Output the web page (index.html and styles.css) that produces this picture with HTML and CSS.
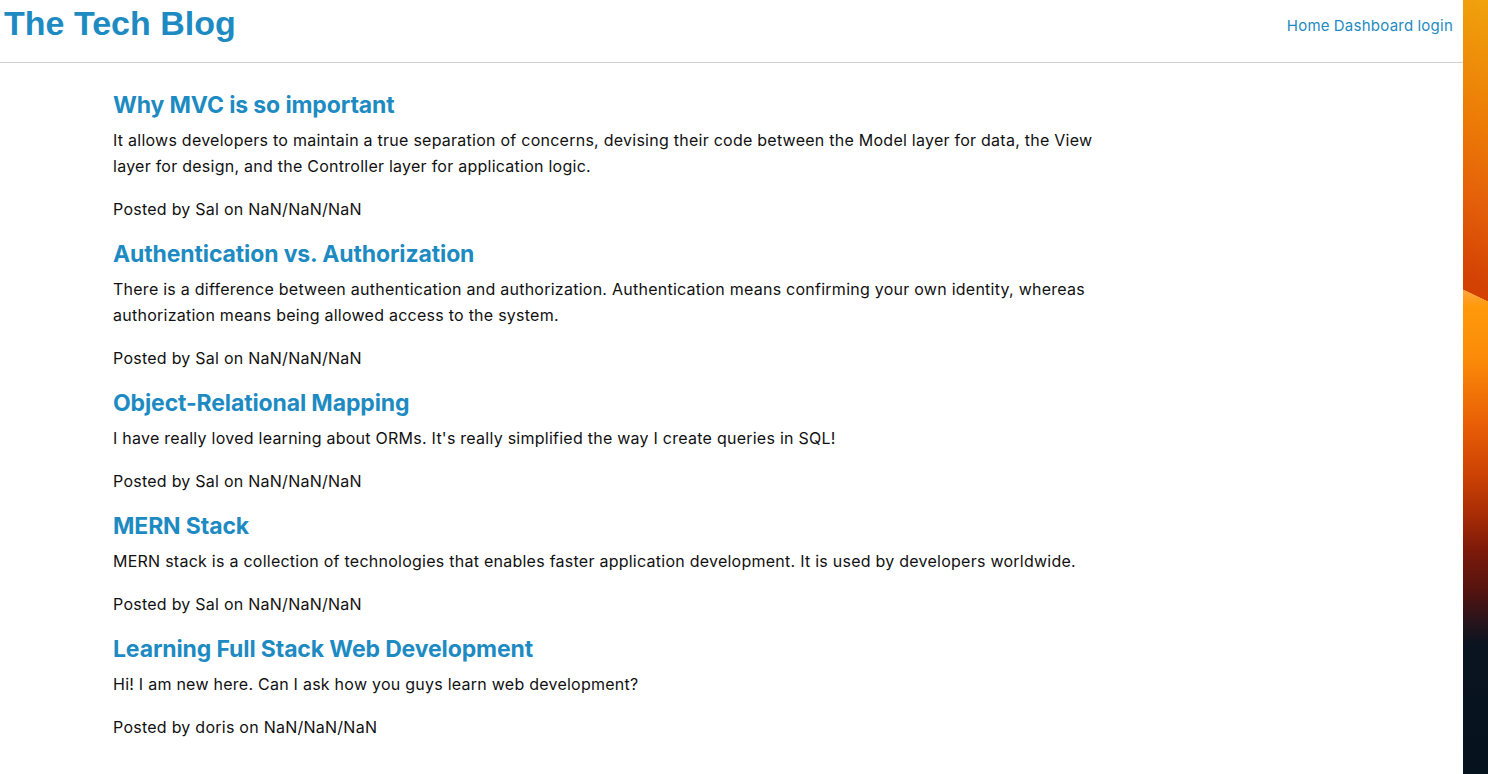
FILE: index.html
```html
<!DOCTYPE html>
<html lang="en">
<head>
<meta charset="utf-8">
<title>The Tech Blog</title>
<link rel="stylesheet" href="styles.css">
</head>
<body>
<div class="window">
  <div class="page">
    <header class="site-header">
      <h1 class="brand">The Tech Blog</h1>
      <nav class="nav">
        <a href="#">Home</a>
        <a href="#">Dashboard</a>
        <a href="#">login</a>
      </nav>
    </header>
    <main class="posts">
      <article class="post">
        <h2 class="post-title">Why MVC is so important</h2>
        <p class="post-body">It allows developers to maintain a true separation of concerns, devising their code between the Model layer for data, the View layer for design, and the Controller layer for application logic.</p>
        <p class="post-meta">Posted by Sal on NaN/NaN/NaN</p>
      </article>
      <article class="post">
        <h2 class="post-title">Authentication vs. Authorization</h2>
        <p class="post-body">There is a difference between authentication and authorization. Authentication means confirming your own identity, whereas authorization means being allowed access to the system.</p>
        <p class="post-meta">Posted by Sal on NaN/NaN/NaN</p>
      </article>
      <article class="post">
        <h2 class="post-title">Object-Relational Mapping</h2>
        <p class="post-body">I have really loved learning about ORMs. It's really simplified the way I create queries in SQL!</p>
        <p class="post-meta">Posted by Sal on NaN/NaN/NaN</p>
      </article>
      <article class="post">
        <h2 class="post-title">MERN Stack</h2>
        <p class="post-body">MERN stack is a collection of technologies that enables faster application development. It is used by developers worldwide.</p>
        <p class="post-meta">Posted by Sal on NaN/NaN/NaN</p>
      </article>
      <article class="post">
        <h2 class="post-title">Learning Full Stack Web Development</h2>
        <p class="post-body">Hi! I am new here. Can I ask how you guys learn web development?</p>
        <p class="post-meta">Posted by doris on NaN/NaN/NaN</p>
      </article>
    </main>
  </div>
  <div class="desktop"></div>
</div>
</body>
</html>
```
FILE: styles.css
```css
html, body {
  margin: 0;
  padding: 0;
  height: 100%;
}
body {
  font-family: Inter, "Noto Sans", sans-serif;
  color: #111;
  background: #fff;
  overflow: hidden;
}
.window {
  display: flex;
  height: 774px;
}
.page {
  flex: 0 0 1463px;
  background: #fff;
}
.desktop {
  flex: 1 1 auto;
  background-color: #05131f;
  background-image:
    linear-gradient(205.6deg,
      #f0a30c 0px,
      #ec7a06 118px,
      #e4600a 186px,
      #d34203 258px,
      #d24002 271.5px,
      transparent 272px),
    linear-gradient(180deg,
      #ffb347 0px,
      #ffa53a 292px,
      #ff9a0b 306px,
      #fb8a08 360px,
      #e85e06 425px,
      #cc4204 475px,
      #a82c05 515px,
      #7d1a0a 550px,
      #55130f 590px,
      #2a141b 620px,
      #0a1420 645px,
      #05131f 774px);
  background-size: 100% 310px, 100% 100%;
  background-repeat: no-repeat;
}
.site-header {
  display: flex;
  justify-content: space-between;
  align-items: flex-start;
  height: 62px;
  border-bottom: 1px solid #cfcfcf;
  padding: 0 10px 0 4px;
  box-sizing: content-box;
}
.brand {
  margin: 0;
  font-family: "Liberation Sans", Arial, sans-serif;
  font-weight: bold;
  font-size: 34px;
  line-height: 46px;
  color: #1d8bc2;
}
.nav {
  display: flex;
  gap: 4px;
  padding-top: 15px;
  font-size: 15px;
  line-height: 22px;
  letter-spacing: 0.25px;
}
.nav a {
  color: #1d8bc2;
  text-decoration: none;
}
.posts {
  padding: 27px 0 0 113px;
  max-width: 990px;
}
.post-title {
  margin: 0 0 7px;
  font-size: 23px;
  line-height: 30px;
  font-weight: 700;
  letter-spacing: -0.13px;
  color: #1d8bc2;
}
.post-body {
  margin: 0 0 17px;
  font-size: 16px;
  line-height: 26px;
  letter-spacing: 0.25px;
}
.post-meta {
  margin: 0 0 17px;
  font-size: 16px;
  line-height: 26px;
  letter-spacing: 0.25px;
}
```
